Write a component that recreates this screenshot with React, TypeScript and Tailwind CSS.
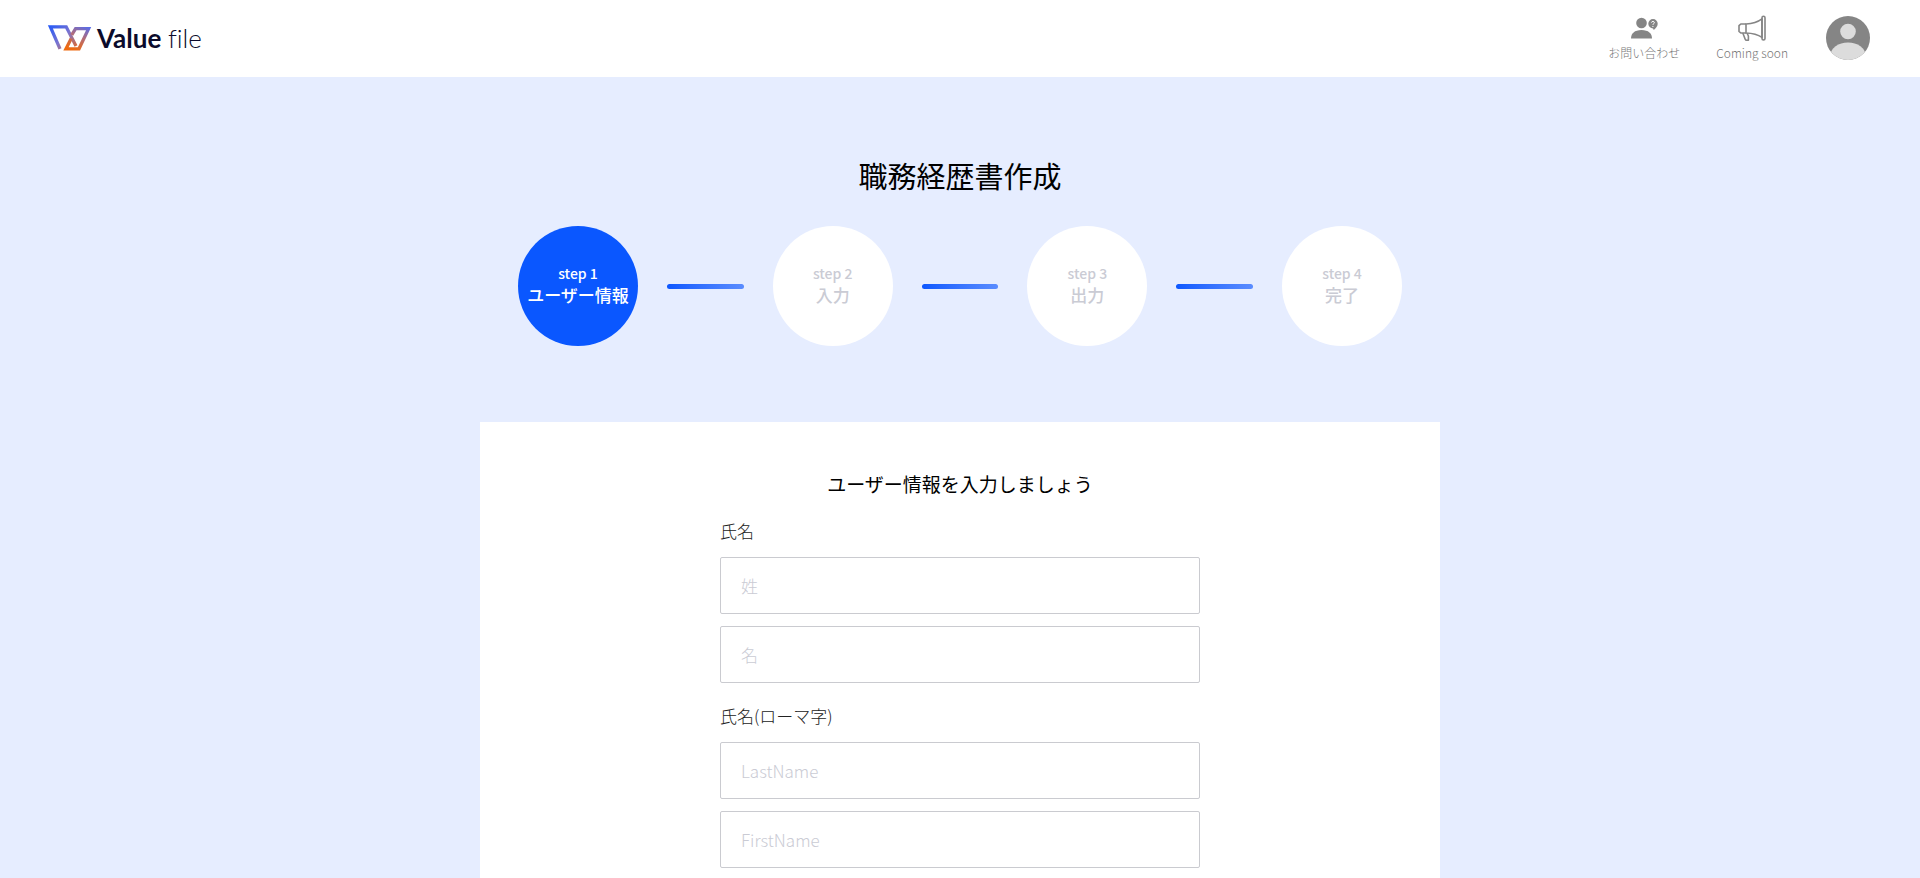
const steps = [
  { step: "step 1", label: "ユーザー情報" },
  { step: "step 2", label: "入力" },
  { step: "step 3", label: "出力" },
  { step: "step 4", label: "完了" },
];

const fieldGroups = [
  {
    title: "氏名",
    fields: [
      { name: "familyName", placeholder: "姓" },
      { name: "givenName", placeholder: "名" },
    ],
  },
  {
    title: "氏名(ローマ字)",
    fields: [
      { name: "lastNameRoman", placeholder: "LastName" },
      { name: "firstNameRoman", placeholder: "FirstName" },
    ],
  },
];

function Logo() {
  return (
    <a href="#" className="flex items-center gap-1 text-[#0b0b2b]">
      <svg width="46" height="28" viewBox="0 0 46 28" fill="none" strokeWidth="3.3">
        <defs>
          <linearGradient id="logoLeft" x1="4" y1="2" x2="28" y2="26" gradientUnits="userSpaceOnUse">
            <stop stopColor="#2b5cf5" />
            <stop offset="0.5" stopColor="#7b74d0" />
            <stop offset="1" stopColor="#e0682a" />
          </linearGradient>
          <linearGradient id="logoRight" x1="38" y1="2" x2="28" y2="26" gradientUnits="userSpaceOnUse">
            <stop stopColor="#5a6ce6" />
            <stop offset="0.45" stopColor="#b06c7c" />
            <stop offset="1" stopColor="#ee6a10" />
          </linearGradient>
        </defs>
        <path d="M13 24.8 3.4 2.8H19.2L29 22" stroke="url(#logoLeft)" />
        <path d="M24.8 10.8 28.6 4.6H41.6L32 24.8H19L24.2 14.5" stroke="url(#logoRight)" />
      </svg>
      <span className="font-[Lato,sans-serif] text-[26px] leading-7 [font-variant-ligatures:none]">
        <span className="font-bold">Value</span> <span className="font-light">file</span>
      </span>
    </a>
  );
}

function ContactIcon() {
  return (
    <svg width="28" height="26" viewBox="0 0 28 26" fill="#858585">
      <circle cx="11.5" cy="8" r="5.3" />
      <path d="M1 23.5C1 18.5 4.5 15 11.5 15S22 18.5 22 23.5Z" />
      <path d="M23 4a4.7 4.7 0 0 1 4.7 4.7c0 3-2.2 4.3-3.9 6.3l-.8-1.6A4.7 4.7 0 0 1 23 4Z" />
      <path d="M21.4 7.6c.2-1.6 3-1.5 3 .1 0 1-1.5 1-1.5 2.1M22.9 11v1" fill="none" stroke="#fff" />
    </svg>
  );
}

function MegaphoneIcon() {
  return (
    <svg width="28" height="26" viewBox="0 0 28 26" fill="none" stroke="#858585" strokeWidth="1.6" strokeLinejoin="round">
      <rect x="24" y="1.2" width="3" height="23.8" rx="1.5" />
      <path d="M8 9C15 8.6 20 6.8 24 3.8V22.4C20 19.6 15 18.2 8 18Z" />
      <path d="M8 9H2.8L1 10.6V16.4L2.8 18H8" />
      <path d="M4.8 18 7.2 24.2Q7.6 25.2 8.6 25.2H10.4V21L9 18" />
    </svg>
  );
}

function Avatar() {
  return (
    <svg width="44" height="44" viewBox="0 0 44 44">
      <defs>
        <clipPath id="avatarClip">
          <circle cx="22" cy="22" r="22" />
        </clipPath>
      </defs>
      <g clipPath="url(#avatarClip)">
        <rect width="44" height="44" fill="#858585" />
        <circle cx="22" cy="15.5" r="7.8" fill="#dcdcdc" />
        <ellipse cx="22" cy="39" rx="17.5" ry="12.5" fill="#dcdcdc" />
      </g>
    </svg>
  );
}

function Header() {
  return (
    <header className="flex items-center justify-between bg-white pt-[15px] pr-[50px] pb-4 pl-[47px]">
      <Logo />
      <nav className="flex items-center gap-9 text-xs leading-4 font-light text-[#777]">
        <a href="#" className="flex flex-col items-center gap-1">
          <ContactIcon />
          お問い合わせ
        </a>
        <a href="#" className="flex flex-col items-center gap-1">
          <MegaphoneIcon />
          Coming soon
        </a>
        <button type="button" aria-label="マイページ" className="ml-0.5 cursor-pointer rounded-full">
          <Avatar />
        </button>
      </nav>
    </header>
  );
}

function Steps({ current }: { current: number }) {
  return (
    <ol className="mx-auto flex w-full max-w-[884px] items-center">
      {steps.map((item, i) => (
        <li key={item.step} className={i > 0 ? "flex flex-1 items-center" : "flex items-center"}>
          {i > 0 && (
            <div className="mx-[29px] h-[5px] flex-1 rounded-full bg-linear-to-r from-[#0b57ff] to-[#5a8cff]" />
          )}
          <div
            className={`flex size-[120px] flex-col items-center justify-center rounded-full pb-1 font-medium ${
              i === current ? "bg-[#0a57ff] text-white" : "bg-white text-[#cacbd4]"
            }`}
          >
            <span className="text-sm leading-[22px]">{item.step}</span>
            <span className="text-[17px] leading-[22px] whitespace-nowrap">{item.label}</span>
          </div>
        </li>
      ))}
    </ol>
  );
}

export default function App() {
  return (
    <div className="min-h-screen bg-[#e6edff] font-['Noto_Sans_CJK_JP',sans-serif] text-black">
      <Header />
      <main className="pt-20">
        <h1 className="text-center text-[29px] leading-9">職務経歴書作成</h1>
        <div className="mt-[33px]">
          <Steps current={0} />
        </div>

        <section className="mx-auto mt-[76px] w-1/2 bg-white pt-12 pb-16">
          <h2 className="text-center text-[19px] leading-7">ユーザー情報を入力しましょう</h2>
          <form className="mx-auto mt-5 flex w-1/2 flex-col gap-5">
            {fieldGroups.map((group) => (
              <fieldset key={group.title}>
                <legend className="mb-[13px] text-[17px] leading-[26px] font-light text-[#222]">{group.title}</legend>
                <div className="flex flex-col gap-3">
                  {group.fields.map((field) => (
                    <input
                      key={field.name}
                      type="text"
                      name={field.name}
                      aria-label={field.placeholder}
                      placeholder={field.placeholder}
                      className="h-[57px] w-full rounded-xs border border-[#cacbd0] px-5 text-[17px] font-light placeholder:text-[#cacbd4]"
                    />
                  ))}
                </div>
              </fieldset>
            ))}
          </form>
        </section>
      </main>
    </div>
  );
}
